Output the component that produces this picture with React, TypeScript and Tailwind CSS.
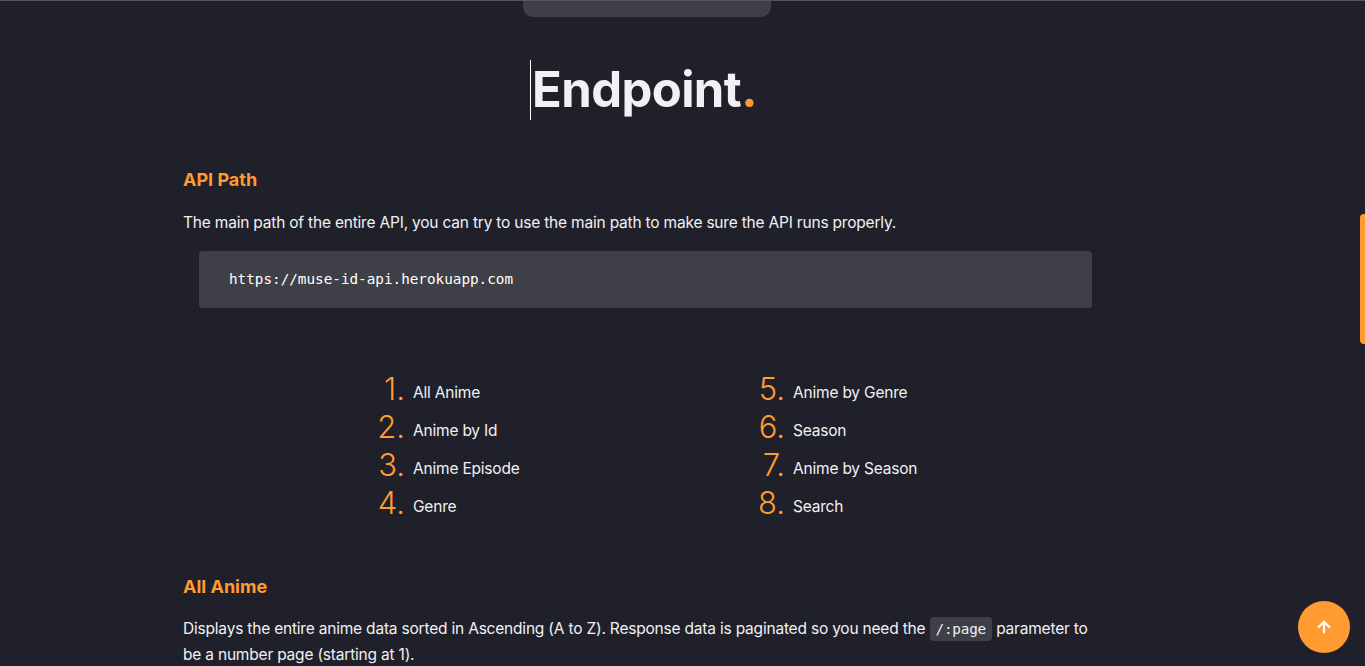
import React from "react";

const endpoints: string[] = [
    "All Anime",
    "Anime by Id",
    "Anime Episode",
    "Genre",
    "Anime by Genre",
    "Season",
    "Anime by Season",
    "Search",
];

function ArrowUp() {
    return (
        <svg width="18" height="18" viewBox="0 0 24 24" fill="none" stroke="white" strokeWidth="3" strokeLinecap="round" strokeLinejoin="round">
            <path d="M12 19V5" />
            <path d="M5 12l7-7 7 7" />
        </svg>
    );
}

function App() {
    return (
        <div className="w-full h-[666px] overflow-hidden bg-[#1f2029] border-t border-[#55565c] text-[#f1f1f4] font-['Inter',sans-serif] relative">
            {/* top nav stub */}
            <div className="flex justify-center">
                <div className="w-[248px] h-[16px] bg-[#3f3f47] rounded-b-[10px] ml-[-72px]"></div>
            </div>

            <div className="w-[925px] ml-[183px]">
                <div className="flex justify-center pt-[43px] pr-[4px]">
                    <h1 className="text-[49px] leading-[60px] font-bold tracking-[-0.6px] border-l border-white pl-[1px]">
                        Endpoint<span className="text-[#ff9b30]">.</span>
                    </h1>
                </div>

                <h2 className="mt-[48px] text-[18px] font-bold text-[#ff9b30] leading-[24px]">API Path</h2>
                <p className="mt-[18px] text-[15.5px] leading-[25px] tracking-[-0.2px]">
                    The main path of the entire API, you can try to use the main path to make sure the API runs properly.
                </p>
                <div className="mx-4 mt-[16px] h-[57px] rounded bg-[#3f3f48] flex items-center px-[30px]">
                    <code className="font-['DejaVu_Sans_Mono',monospace] text-[14.3px] text-white">https://muse-id-api.herokuapp.com</code>
                </div>

                <ol className="mt-[63px] ml-[192px] grid grid-cols-[380px_auto] grid-rows-4 grid-flow-col gap-y-[2px]">
                    {endpoints.map((name, i) => (
                        <li key={name} className="flex items-end h-[36px]">
                            <span className="w-[30px] text-right text-[31px] leading-[37px] font-light text-[#ff9b30]">{i + 1}.</span>
                            <span className="ml-[8px] text-[15.5px] leading-[28px] tracking-[-0.2px]">{name}</span>
                        </li>
                    ))}
                </ol>

                <h2 className="mt-[54px] text-[18px] font-bold text-[#ff9b30] leading-[24px]">All Anime</h2>
                <p className="mt-[17px] text-[15.5px] leading-[25px] tracking-[-0.2px]">
                    Displays the entire anime data sorted in Ascending (A to Z). Response data is paginated so you need the{" "}
                    <code className="font-['DejaVu_Sans_Mono',monospace] text-[14.3px] bg-[#3f3f48] rounded px-[6px] py-[4px]">/:page</code>{" "}
                    parameter to be a number page (starting at 1).
                </p>
                <div className="mt-[9px] ml-[563px] w-[48px] h-[20px] rounded bg-[#3f3f48]"></div>
            </div>

            {/* scrollbar thumb */}
            <div className="absolute right-0 top-[213px] w-[5px] h-[130px] rounded-l bg-[#ff9b30]"></div>

            <button className="absolute right-[15px] bottom-[13px] w-[52px] h-[52px] rounded-full bg-[#ff9b30] flex items-center justify-center">
                <ArrowUp />
            </button>
        </div>
    );
}

export default App;
